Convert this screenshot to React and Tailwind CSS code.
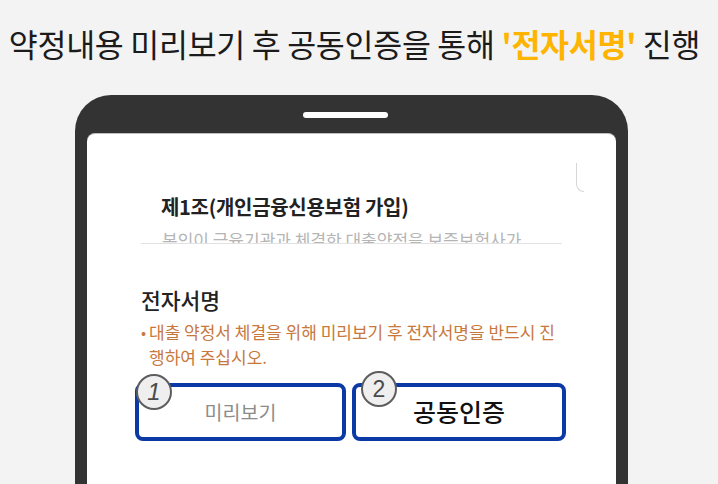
export default function App() {
  return (
    <div
      className="h-[484px] w-[718px] overflow-hidden bg-[#f3f3f3]"
      style={{ fontFamily: '"Noto Sans CJK KR", "Noto Sans", sans-serif' }}
    >
      {/* Title */}
      <h1 className="whitespace-nowrap pt-[22px] pr-[9px] text-center text-[31.5px] leading-[42px] font-normal tracking-[-0.3px] text-[#1b1b1b]">
        약정내용 미리보기 후 공동인증을 통해{" "}
        <span className="font-bold text-[#ffb400]">'전자서명'</span> 진행
      </h1>

      {/* Phone */}
      <div className="ml-[75px] mt-[31px] w-[553px] rounded-t-[36px] bg-[#333333] px-[12px]">
        <div className="pt-[17px] pb-[15px] pl-[216px]">
          <div className="h-[6px] w-[85px] rounded-full bg-white" />
        </div>

        <div className="relative h-[360px] rounded-t-[8px] border-t border-[#bdbdbd] bg-white">
          {/* scroll indicator */}
          <div className="absolute left-[489px] top-[29px] h-[29px] w-[8px] rounded-bl-[8px] border-l border-b border-[#d6d6d6]" />

          <div className="pl-[74px] pt-[59px]">
            <p className="text-[20px] leading-[28px] font-semibold tracking-[-0.3px] text-[#222]">
              제1조(개인금융신용보험 가입)
            </p>
          </div>
          <div className="ml-[54px] mt-[7px] h-[16px] w-[421px] overflow-hidden border-b border-[#e2e2e2] pl-[21px]">
            <p className="whitespace-nowrap text-[17px] leading-[24px] text-[#b5b5b5]">
              본인이 금융기관과 체결한 대출약정을 보증보험사가
            </p>
          </div>

          <div className="pl-[54px]">
            <p className="mt-[41px] text-[21.5px] leading-[30px] font-medium text-[#222]">전자서명</p>
            <div className="mt-[4px] flex text-[17px] leading-[25px] text-[#c7783d]">
              <span className="w-[8px] shrink-0 text-[15px]">•</span>
              <div className="whitespace-nowrap">
                <p>대출 약정서 체결을 위해 미리보기 후 전자서명을 반드시 진</p>
                <p>행하여 주십시오.</p>
              </div>
            </div>
          </div>

          {/* Buttons */}
          <div className="ml-[48px] mt-[14px] flex gap-[6px]">
            <div className="relative flex h-[58px] w-[211px] items-center justify-center rounded-[8px] border-[4px] border-[#0b39a6] bg-white">
              <span className="text-[19.5px] text-[#8c8c8c]">미리보기</span>
              <div className="absolute -left-[3px] -top-[13px] flex h-[36px] w-[36px] items-center justify-center rounded-full border-2 border-[#5d5d5d] bg-[#efefef]">
                <span
                  className="text-[24px] italic leading-none text-[#4a4a4a]"
                  style={{ fontFamily: '"Liberation Sans", sans-serif' }}
                >
                  1
                </span>
              </div>
            </div>
            <div className="relative flex h-[58px] w-[214px] items-center justify-center rounded-[8px] border-[4px] border-[#0b39a6] bg-white">
              <span className="text-[25px] font-medium text-[#111]">공동인증</span>
              <div className="absolute left-[5px] -top-[16px] flex h-[36px] w-[36px] items-center justify-center rounded-full border-2 border-[#5d5d5d] bg-[#efefef]">
                <span
                  className="text-[23px] leading-none text-[#4a4a4a]"
                  style={{ fontFamily: '"Liberation Sans", sans-serif' }}
                >
                  2
                </span>
              </div>
            </div>
          </div>
        </div>
      </div>
    </div>
  );
}
